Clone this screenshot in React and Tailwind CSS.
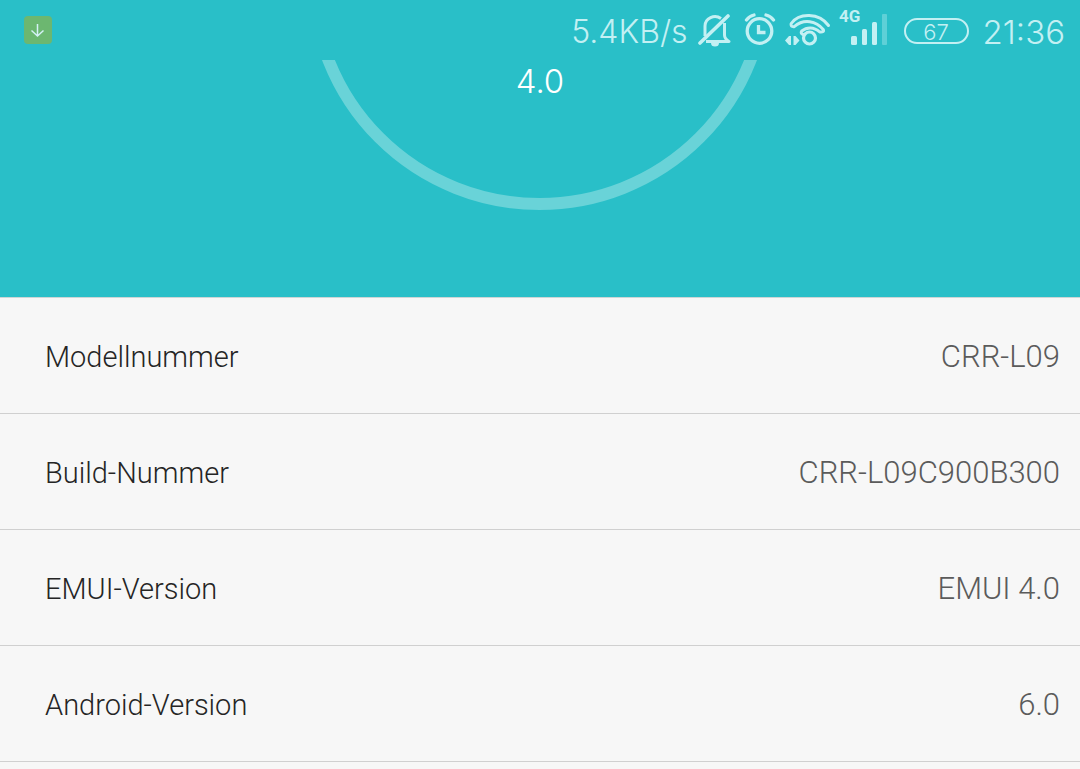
import React from 'react';

const deviceInfo = [
  { label: 'Modellnummer', value: 'CRR-L09' },
  { label: 'Build-Nummer', value: 'CRR-L09C900B300' },
  { label: 'EMUI-Version', value: 'EMUI 4.0' },
  { label: 'Android-Version', value: '6.0' },
];

const DownloadIcon = () => (
  <svg className="w-7 h-7" viewBox="0 0 28 28" fill="none" aria-hidden="true">
    <rect width="28" height="28" rx="4" fill="#6cb770" />
    <path d="M13.500 8v12M7.500 14.500l6 5.500l6 -5.500" stroke="#d4f1f5" strokeWidth="1.500" />
  </svg>
);

const MutedBellIcon = () => (
  <svg className="w-[34px] h-[34px]" viewBox="698 13 34 34" fill="none" stroke="currentColor" aria-hidden="true">
    <path d="M705 36V26a10 9.500 0 0 1 16 -7.500" strokeWidth="3" />
    <path d="M724.500 23v12q0 4 4.500 6.500H706" strokeWidth="3" strokeLinejoin="round" />
    <path d="M700 43L728 16" strokeWidth="3.600" strokeLinecap="round" />
    <path d="M711 43h8a4 3.500 0 0 1 -8 0z" fill="currentColor" stroke="none" />
  </svg>
);

const AlarmIcon = () => (
  <svg className="w-8 h-[34px]" viewBox="744 13 32 34" fill="none" stroke="currentColor" aria-hidden="true">
    <circle cx="759.500" cy="31" r="12.300" strokeWidth="3.300" />
    <path d="M758.500 25v7.500h7" strokeWidth="3.300" />
    <path d="M746.500 20q3 -4 7.500 -5M773.500 20q-3 -4 -7.500 -5" strokeWidth="3.300" strokeLinecap="round" />
  </svg>
);

const WifiIcon = () => (
  <svg className="w-[46px] h-[34px]" viewBox="785 13 46 34" fill="none" stroke="currentColor" strokeLinecap="round" strokeLinejoin="round" aria-hidden="true">
    <path d="M828.500 25.500C819 12.500 799 12.500 791.200 23.500q-1 3.500 3 3.200c10 -8.500 22 -5.500 29 2.800q1.500 3 -3.500 2.500c-6 -5.500 -13 -5 -18 -1q-1.500 2.500 1.500 3.500" strokeWidth="3" />
    <circle cx="809.500" cy="38" r="6" strokeWidth="3.200" />
    <path d="M785 40.500l4 -4.500h2v9h-2zM799.500 40.500l-4 -4.500h-2v9h2z" fill="currentColor" stroke="none" />
  </svg>
);

const SignalIcon = () => (
  <svg className="w-[50px] h-[54px]" viewBox="837 3 50 54" fill="currentColor" aria-hidden="true">
    <text x="839" y="22" fontSize="17" fontWeight="700" fontFamily="Roboto, sans-serif">4G</text>
    <rect x="851" y="36" width="6" height="9" rx="1.500" />
    <rect x="862" y="29" width="5" height="16" rx="1.500" />
    <rect x="872" y="22" width="5" height="23" rx="1.500" />
    <rect x="882" y="14" width="5" height="31" rx="1" opacity="0.35" />
  </svg>
);

const StatusBar = () => (
  <header className="h-[60px] pl-6 pr-[15px] flex items-center justify-between text-[#c3f0f3]">
    <DownloadIcon />
    <div className="flex items-center text-[32px] leading-10">
      <span className="mr-2.5 pt-1">5.4KB/s</span>
      <div className="flex items-center gap-3">
        <MutedBellIcon />
        <AlarmIcon />
      </div>
      <div className="ml-[9px] mr-[17px] flex items-center gap-1.5">
        <WifiIcon />
        <SignalIcon />
      </div>
      <span className="w-[65px] h-[26px] mt-0.5 mr-3.5 pt-0.5 border-2 border-current rounded-full flex items-center justify-center text-[22px]">
        67
      </span>
      <time className="pt-1 text-[33px]">21:36</time>
    </div>
  </header>
);

const VersionDial = () => (
  <section className="relative h-[237px] text-white">
    <svg className="block mx-auto w-[480px] h-[150px]" viewBox="0 60 480 150" fill="none" aria-hidden="true">
      <circle cx="239.500" cy="-22.700" r="226.700" stroke="#69d3d8" strokeWidth="12" />
    </svg>
    <p className="absolute top-0 inset-x-0 text-center text-[33px] leading-[42px]">4.0</p>
  </section>
);

const App = () => {
  return (
    <div className="min-h-screen bg-[#f7f7f7] font-['Inter','Liberation_Sans',sans-serif] font-light">
      <div className="bg-[#29bfc8]">
        <StatusBar />
        <VersionDial />
      </div>

      <table className="w-full border-t border-[#cdd6d6] font-['Roboto','Liberation_Sans',sans-serif]">
        <tbody>
          {deviceInfo.map((row) => (
            <tr key={row.label} className="h-[116px] border-b border-[#d0d0d0]">
              <th scope="row" className="pl-[45px] pt-1 text-left text-[29px] font-light text-[#252525]">{row.label}</th>
              <td className="pr-5 pt-1 text-right text-[31px] text-[#5b5b5b]">{row.value}</td>
            </tr>
          ))}
        </tbody>
      </table>
    </div>
  );
};

export default App;
